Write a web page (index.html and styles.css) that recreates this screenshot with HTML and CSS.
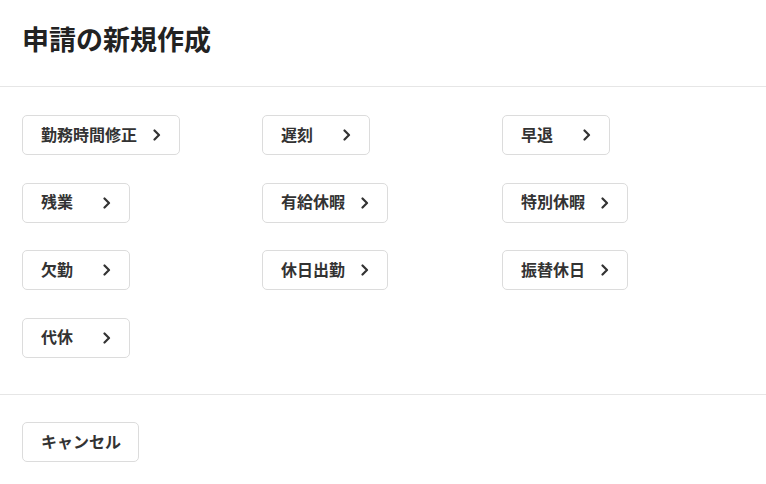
FILE: index.html
```html
<!DOCTYPE html>
<html lang="ja">
<head>
<meta charset="utf-8">
<title>申請の新規作成</title>
<link rel="stylesheet" href="styles.css">
</head>
<body>
<div class="dialog">
  <header class="dialog-header">
    <h1 class="dialog-title">申請の新規作成</h1>
  </header>
  <section class="dialog-body">
    <div class="type-grid">
      <button class="type-btn"><span class="type-label">勤務時間修正</span><svg class="chev" viewBox="0 0 10 12" width="10" height="12"><path d="M2.5 1.5 L7 6 L2.5 10.5" fill="none" stroke="#333" stroke-width="2.2" stroke-linecap="round" stroke-linejoin="round"/></svg></button>
      <button class="type-btn"><span class="type-label">遅刻</span><svg class="chev" viewBox="0 0 10 12" width="10" height="12"><path d="M2.5 1.5 L7 6 L2.5 10.5" fill="none" stroke="#333" stroke-width="2.2" stroke-linecap="round" stroke-linejoin="round"/></svg></button>
      <button class="type-btn"><span class="type-label">早退</span><svg class="chev" viewBox="0 0 10 12" width="10" height="12"><path d="M2.5 1.5 L7 6 L2.5 10.5" fill="none" stroke="#333" stroke-width="2.2" stroke-linecap="round" stroke-linejoin="round"/></svg></button>
      <button class="type-btn"><span class="type-label">残業</span><svg class="chev" viewBox="0 0 10 12" width="10" height="12"><path d="M2.5 1.5 L7 6 L2.5 10.5" fill="none" stroke="#333" stroke-width="2.2" stroke-linecap="round" stroke-linejoin="round"/></svg></button>
      <button class="type-btn"><span class="type-label">有給休暇</span><svg class="chev" viewBox="0 0 10 12" width="10" height="12"><path d="M2.5 1.5 L7 6 L2.5 10.5" fill="none" stroke="#333" stroke-width="2.2" stroke-linecap="round" stroke-linejoin="round"/></svg></button>
      <button class="type-btn"><span class="type-label">特別休暇</span><svg class="chev" viewBox="0 0 10 12" width="10" height="12"><path d="M2.5 1.5 L7 6 L2.5 10.5" fill="none" stroke="#333" stroke-width="2.2" stroke-linecap="round" stroke-linejoin="round"/></svg></button>
      <button class="type-btn"><span class="type-label">欠勤</span><svg class="chev" viewBox="0 0 10 12" width="10" height="12"><path d="M2.5 1.5 L7 6 L2.5 10.5" fill="none" stroke="#333" stroke-width="2.2" stroke-linecap="round" stroke-linejoin="round"/></svg></button>
      <button class="type-btn"><span class="type-label">休日出勤</span><svg class="chev" viewBox="0 0 10 12" width="10" height="12"><path d="M2.5 1.5 L7 6 L2.5 10.5" fill="none" stroke="#333" stroke-width="2.2" stroke-linecap="round" stroke-linejoin="round"/></svg></button>
      <button class="type-btn"><span class="type-label">振替休日</span><svg class="chev" viewBox="0 0 10 12" width="10" height="12"><path d="M2.5 1.5 L7 6 L2.5 10.5" fill="none" stroke="#333" stroke-width="2.2" stroke-linecap="round" stroke-linejoin="round"/></svg></button>
      <button class="type-btn"><span class="type-label">代休</span><svg class="chev" viewBox="0 0 10 12" width="10" height="12"><path d="M2.5 1.5 L7 6 L2.5 10.5" fill="none" stroke="#333" stroke-width="2.2" stroke-linecap="round" stroke-linejoin="round"/></svg></button>
    </div>
  </section>
  <footer class="dialog-footer">
    <button class="cancel-btn">キャンセル</button>
  </footer>
</div>
</body>
</html>
```

FILE: styles.css
```css
html, body {
  margin: 0;
  padding: 0;
  background: #ffffff;
}
body {
  font-family: "Noto Sans CJK JP", "Noto Sans", sans-serif;
  color: #333333;
}
.dialog {
  width: 766px;
}
.dialog-header {
  padding: 20px 22px 0;
  height: 66px;
  border-bottom: 1px solid #e6e6e6;
}
.dialog-title {
  margin: 0;
  font-size: 27px;
  line-height: 38px;
  font-weight: 700;
  color: #222222;
}
.dialog-body {
  padding: 28px 22px 36px;
  border-bottom: 1px solid #e6e6e6;
}
.type-grid {
  display: grid;
  grid-template-columns: 240px 240px 240px;
  row-gap: 27.5px;
  justify-items: start;
}
.type-btn {
  display: flex;
  align-items: center;
  gap: 15px;
  height: 40px;
  box-sizing: border-box;
  padding: 0 17px 0 18px;
  background: #ffffff;
  border: 1px solid #dcdcdc;
  border-radius: 5px;
  font-family: inherit;
  font-size: 16px;
  font-weight: 700;
  color: #333333;
  cursor: pointer;
}
.type-label {
  min-width: 46px;
  text-align: left;
  line-height: 20px;
  padding-bottom: 3px;
}
.chev {
  display: block;
  flex: none;
}
.dialog-footer {
  padding: 27px 22px;
}
.cancel-btn {
  height: 40px;
  box-sizing: border-box;
  padding: 0 17px 2px 18px;
  background: #ffffff;
  border: 1px solid #dcdcdc;
  border-radius: 5px;
  font-family: inherit;
  font-size: 16px;
  font-weight: 700;
  color: #333333;
}
```
